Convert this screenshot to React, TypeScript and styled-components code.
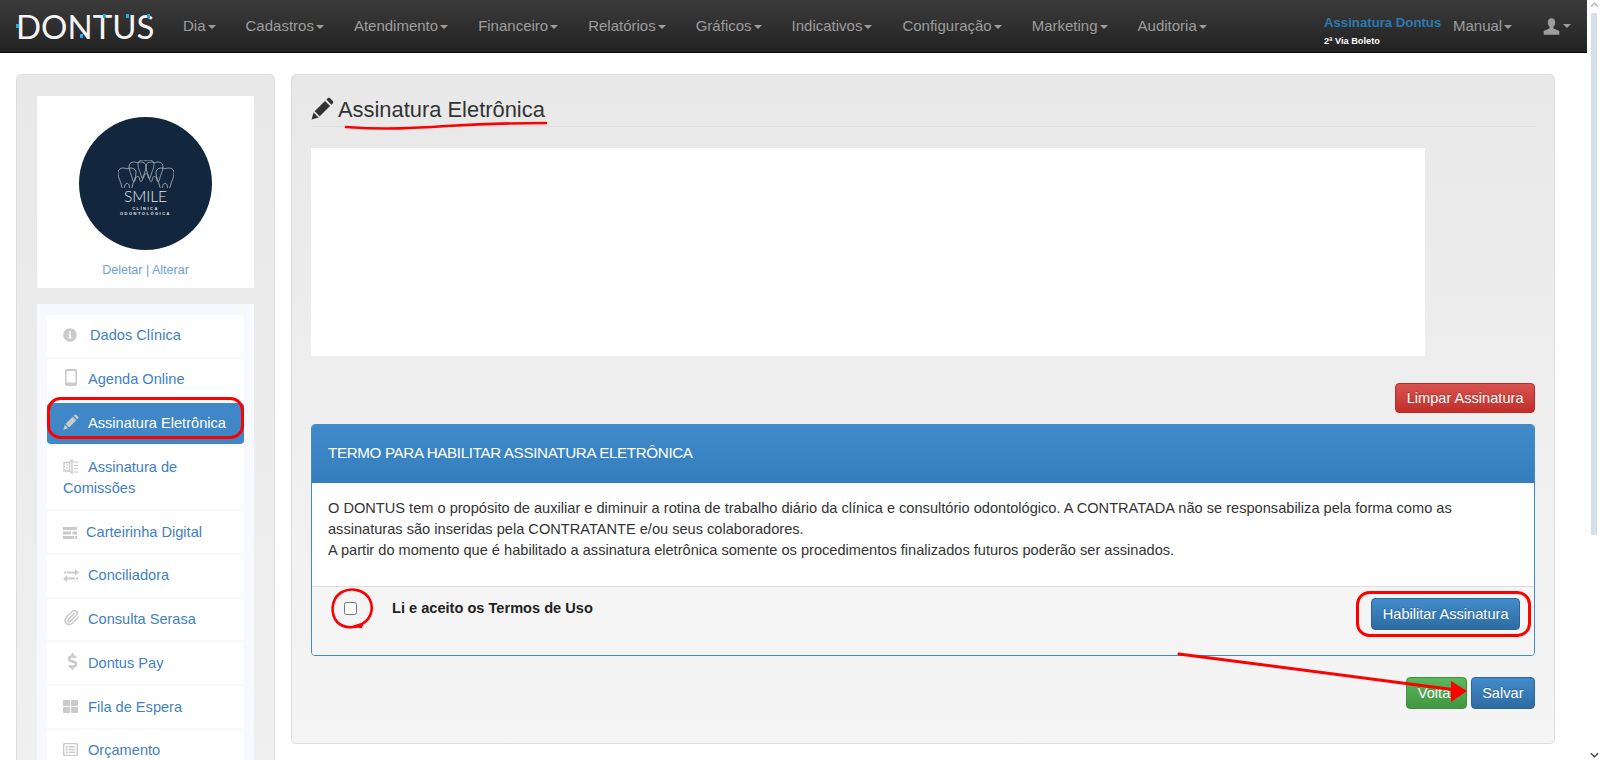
import React from 'react';
import styled, { createGlobalStyle } from 'styled-components';
import { FaInfoCircle, FaDollarSign, FaThLarge, FaRegListAlt } from 'react-icons/fa';
import { Paperclip } from 'lucide-react';

const GlobalStyle = createGlobalStyle`
  html, body { margin: 0; padding: 0; height: 100%; overflow: hidden; background: #fff; }
  body { font-family: "Liberation Sans", Arial, sans-serif; font-size: 14.6px; color: #333; }
  * { box-sizing: border-box; }
`;

const navLeft = [
  'Dia',
  'Cadastros',
  'Atendimento',
  'Financeiro',
  'Relatórios',
  'Gráficos',
  'Indicativos',
  'Configuração',
  'Marketing',
  'Auditoria',
];

const PencilIcon = ({ size = 16 }: { size?: number }) => (
  <svg width={size} height={size} viewBox="0 0 24 24" fill="currentColor">
    <path d="M0.5 23.5l2.2-7.4 5.2 5.2z" />
    <path d="M3.8 14.9L14.6 4.1l5.3 5.3L9.1 20.2z" />
    <path d="M16 2.7l1.5-1.5q1.1-1.1 2.4 0l2.9 2.9q1.1 1.3 0 2.4l-1.5 1.5z" />
  </svg>
);

const PhoneIcon = () => (
  <svg width="12" height="17" viewBox="0 0 12 17">
    <path
      fillRule="evenodd"
      fill="currentColor"
      d="M2 0h8a2 2 0 0 1 2 2v13a2 2 0 0 1-2 2H2a2 2 0 0 1-2-2V2a2 2 0 0 1 2-2zM1.6 2v11.4h8.8V2z"
    />
  </svg>
);

const CommissionIcon = () => (
  <svg width="16" height="15" viewBox="0 0 16 15" fill="none" stroke="currentColor">
    <path strokeWidth="1.4" d="M1 3.5h5.500v8.500H1z" />
    <path strokeWidth="1.4" d="M6.500 3L9 1v13l-2.500-2" />
    <path strokeWidth="1.2" d="M3 6h2M3 9h2M10 3h5.500M11 6.500h4M11 9.500h4M10 13h5" />
  </svg>
);

const TasksIcon = () => (
  <svg width="14" height="12" viewBox="0 0 14 12" fill="currentColor">
    <path d="M0 0h14v3H0zM0 4.500h8v3H0zM9.500 4.500H14v3H9.500zM0 9h11v3H0zM12 9h2v3h-2z" />
  </svg>
);

const TransferIcon = () => (
  <svg width="16" height="13" viewBox="0 0 16 13" fill="currentColor">
    <path d="M4 2.400h8V0l4 3.400-4 3.200V4.400H4zM1 2.400h2v2H1z" />
    <path d="M12 8.600H4V6.400L0 9.700 4 13v-2.400h8zM13 8.600h2v2h-2z" />
  </svg>
);

const UserIcon = () => (
  <svg width="17" height="17" viewBox="0 0 24 24" fill="currentColor">
    <path d="M12 0.500c-3.600 0-5.200 2.600-5.200 5.800 0 2.600 1 4.700 2.600 6.200v2L1 18.200V23.500h22v-5.300l-8.400-3.700v-2c1.600-1.500 2.600-3.600 2.600-6.200 0-3.200-1.600-5.800-5.200-5.800z" />
  </svg>
);

const ToothMark = ({ x, y, scale }: { x: number; y: number; scale: number }) => (
  <path
    transform={`translate(${x} ${y}) scale(${scale})`}
    d="M0 5C0 0 6-1 10 1c4-2 10-1 10 4 0 7-3 9-4 15-1 4-3 4-3.500 0-.5-4-4.500-4-5 0-.5 4-2.500 4-3.500 0C3 14 0 12 0 5z"
  />
);

const TeethLogo = () => (
  <svg width="56" height="28" viewBox="0 0 56 28" fill="none" stroke="#d5dade" strokeWidth="0.75">
    <ToothMark x={0} y={8} scale={0.9} />
    <ToothMark x={38} y={8} scale={0.9} />
    <ToothMark x={11} y={2} scale={0.85} />
    <ToothMark x={28} y={2} scale={0.85} />
    <ToothMark x={20} y={0} scale={0.8} />
  </svg>
);

const menu = [
  { label: 'Dados Clínica', icon: <FaInfoCircle size={14} />, slot: 27 },
  { label: 'Agenda Online', icon: <PhoneIcon />, slot: 25, inset: 2 },
  { label: 'Assinatura Eletrônica', icon: <PencilIcon size={16} />, slot: 25, active: true },
  { label: 'Assinatura de Comissões', icon: <CommissionIcon />, slot: 25 },
  { label: 'Carteirinha Digital', icon: <TasksIcon />, slot: 23 },
  { label: 'Conciliadora', icon: <TransferIcon />, slot: 25 },
  { label: 'Consulta Serasa', icon: <Paperclip size={17} strokeWidth={2.2} />, slot: 25 },
  { label: 'Dontus Pay', icon: <FaDollarSign size={17} />, slot: 25, inset: 1 },
  { label: 'Fila de Espera', icon: <FaThLarge size={15} />, slot: 25 },
  { label: 'Orçamento', icon: <FaRegListAlt size={15} />, slot: 25 },
];

export default function App() {
  return (
    <Shell>
      <GlobalStyle />
      <Page>
        <Navbar>
          <Brand>
            DONTUS
            <BrandDot $left={0} $top={10} />
            <BrandDot $left={64} $top={20} />
            <BrandDot $left={87} $top={0} />
            <BrandDot $left={110} $top={0} />
            <BrandDot $left={131} $top={0} />
          </Brand>
          <NavList>
            {navLeft.map((label) => (
              <NavItem key={label}>
                {label}
                <Caret />
              </NavItem>
            ))}
          </NavList>
          <NavRight>
            <PlanBlock>
              <PlanName>Assinatura Dontus</PlanName>
              <PlanLink>2ª Via Boleto</PlanLink>
            </PlanBlock>
            <ManualLink>
              Manual
              <Caret />
            </ManualLink>
            <UserMenu>
              <UserIcon />
              <Caret />
            </UserMenu>
          </NavRight>
        </Navbar>

        <Content>
          <SideWell>
            <ProfileCard>
              <LogoCircle>
                <TeethLogo />
                <LogoName>SMILE</LogoName>
                <LogoSub>CLÍNICA</LogoSub>
                <LogoSub>ODONTOLÓGICA</LogoSub>
              </LogoCircle>
              <ProfileLinks>Deletar | Alterar</ProfileLinks>
            </ProfileCard>
            <SideMenu>
              {menu.map((item) => (
                <MenuItem key={item.label} $active={item.active}>
                  <MenuIcon $slot={item.slot} $inset={item.inset || 0}>
                    {item.icon}
                  </MenuIcon>
                  {item.label}
                </MenuItem>
              ))}
            </SideMenu>
          </SideWell>

          <MainWell>
            <PageTitle>
              <PencilIcon size={23} />
              <TitleText>Assinatura Eletrônica</TitleText>
            </PageTitle>
            <SignatureCanvas />
            <ActionRow>
              <Button $kind="danger">Limpar Assinatura</Button>
            </ActionRow>
            <TermsPanel>
              <TermsHeading>TERMO PARA HABILITAR ASSINATURA ELETRÔNICA</TermsHeading>
              <TermsBody>
                O DONTUS tem o propósito de auxiliar e diminuir a rotina de trabalho diário da clínica e
                consultório odontológico. A CONTRATADA não se responsabiliza pela forma como as
                <br />
                assinaturas são inseridas pela CONTRATANTE e/ou seus colaboradores.
                <br />A partir do momento que é habilitado a assinatura eletrônica somente os procedimentos
                finalizados futuros poderão ser assinados.
              </TermsBody>
              <TermsFooter>
                <AcceptLabel>
                  <AcceptBox type="checkbox" />
                  Li e aceito os Termos de Uso
                </AcceptLabel>
                <Button $kind="primary" $tall>
                  Habilitar Assinatura
                </Button>
              </TermsFooter>
            </TermsPanel>
            <FooterRow>
              <Button $kind="success" $tall>
                Voltar
              </Button>
              <Button $kind="primary" $tall>
                Salvar
              </Button>
            </FooterRow>
          </MainWell>
        </Content>
      </Page>

      <Scrollbar>
        <ScrollArrow viewBox="0 0 10 6">
          <path d="M1 5l4-4 4 4" />
        </ScrollArrow>
        <ScrollThumb />
        <ScrollArrowDown viewBox="0 0 10 6">
          <path d="M1 1l4 4 4-4" />
        </ScrollArrowDown>
      </Scrollbar>

      {/* red marks drawn over the screenshot */}
      <Marks viewBox="0 0 1600 760">
        <path d="M346 127c40 3 70 1 100-1 35-2 70-3 100-3" strokeWidth="2.6" />
        <rect x="48.500" y="398.500" width="194" height="39" rx="12" strokeWidth="3" />
        <path d="M362 625c-10 4-22 3-27-6-5-10-2-22 7-27 10-5 23-2 28 8 4 9 1 19-8 24l-6 2 5 1" strokeWidth="2.600" />
        <rect x="1357.500" y="592.500" width="172" height="43" rx="12" strokeWidth="3" />
        <path d="M1179 654L1456 690" strokeWidth="3" />
        <path d="M1451 681L1467 691L1451 702z" fill="#f00" stroke="none" />
      </Marks>
    </Shell>
  );
}

const Shell = styled.div`
  display: flex;
  width: 100%;
  height: 100vh;
  overflow: hidden;
  position: relative;
`;

const Page = styled.div`
  flex: 1;
  min-width: 0;
`;

const Navbar = styled.header`
  display: flex;
  align-items: center;
  height: 53px;
  padding: 0 16px;
  background: linear-gradient(#3c3c3c, #222);
  border-bottom: 1px solid #080808;
  color: #9d9d9d;
  font-size: 15px;
`;

const Brand = styled.div`
  position: relative;
  width: 135px;
  margin-right: 17px;
  flex: none;
  font-family: "Lato", "Liberation Sans", sans-serif;
  font-size: 33px;
  font-weight: 400;
  line-height: 25px;
  letter-spacing: 0;
  color: #f4f4f4;
`;

const BrandDot = styled.i<{ $left: number; $top: number }>`
  position: absolute;
  left: ${(p) => p.$left}px;
  top: ${(p) => p.$top}px;
  width: 3px;
  height: 4px;
  background: #27a9e1;
`;

const NavList = styled.nav`
  display: flex;
  padding-bottom: 2px;
`;

const NavItem = styled.a`
  padding: 0 15px;
  white-space: nowrap;
`;

const Caret = styled.b`
  display: inline-block;
  width: 0;
  height: 0;
  margin-left: 2px;
  vertical-align: middle;
  border-top: 4px solid currentColor;
  border-left: 4px solid transparent;
  border-right: 4px solid transparent;
`;

const NavRight = styled.div`
  display: flex;
  align-items: center;
  margin-left: auto;
`;

const PlanBlock = styled.div`
  display: flex;
  flex-direction: column;
  gap: 4px;
  margin-top: 10px;
  width: 129px;
`;

const PlanName = styled.a`
  color: #2a7ab5;
  font-size: 13.2px;
  font-weight: 700;
  line-height: 16px;
`;

const PlanLink = styled.a`
  color: #fff;
  font-size: 9.2px;
  font-weight: 700;
  line-height: 12px;
`;

const ManualLink = styled.a`
  width: 90px;
  padding-bottom: 2px;
  white-space: nowrap;
`;

const UserMenu = styled.a`
  display: flex;
  align-items: center;
  gap: 1px;
`;

const Content = styled.main`
  display: flex;
  align-items: flex-start;
  gap: 16px;
  padding: 21px 32px 0 16px;
`;

const SideWell = styled.aside`
  flex: none;
  width: 259px;
  padding: 21px 20px;
  background: linear-gradient(#e8e8e8, #f0f0f0);
  border: 1px solid #dedede;
  border-radius: 5px;
`;

const ProfileCard = styled.section`
  display: flex;
  flex-direction: column;
  align-items: center;
  height: 192px;
  padding-top: 21px;
  background: #fff;
`;

const LogoCircle = styled.div`
  display: flex;
  flex-direction: column;
  align-items: center;
  justify-content: center;
  width: 133px;
  height: 133px;
  padding-top: 8px;
  border-radius: 50%;
  background: #12263d;
  color: #e6e9ec;
`;

const LogoName = styled.div`
  font-family: "Lato", "Liberation Sans", sans-serif;
  font-size: 15.5px;
  font-weight: 300;
  line-height: 15px;
  margin: 1px 0 2px;
`;

const LogoSub = styled.div`
  font-size: 4px;
  font-weight: 700;
  line-height: 5px;
  letter-spacing: 1.5px;
`;

const ProfileLinks = styled.a`
  margin-top: 11px;
  font-size: 12.5px;
  line-height: 18px;
  color: #6f9fe0;
`;

const SideMenu = styled.ul`
  display: flex;
  flex-direction: column;
  gap: 2px;
  margin: 16px 0 0;
  padding: 11px 10px;
  list-style: none;
  background: #f8f9fe;
`;

const MenuItem = styled.li<{ $active?: boolean }>`
  padding: 10.4px 16px;
  border-radius: 4px;
  line-height: 21px;
  background: ${(p) => (p.$active ? '#3f87c7' : '#fff')};
  color: ${(p) => (p.$active ? '#fff' : '#3f7fc4')};
`;

const MenuIcon = styled.span<{ $slot: number; $inset: number }>`
  display: inline-flex;
  align-items: center;
  width: ${(p) => p.$slot}px;
  height: 17px;
  padding-left: ${(p) => p.$inset}px;
  vertical-align: -2px;
  color: #cacaca;
`;

const MainWell = styled.section`
  flex: 1;
  min-width: 0;
  height: 670px;
  padding: 20px 19px 0;
  background: linear-gradient(#e8e8e8, #f5f5f5);
  border: 1px solid #dedede;
  border-radius: 5px;
`;

const PageTitle = styled.h1`
  display: flex;
  align-items: center;
  gap: 4px;
  height: 32px;
  margin: 0 0 21px;
  padding-bottom: 4px;
  border-bottom: 1px solid #e0e0e0;
  font-size: 21.9px;
  font-weight: 400;
  color: #333;
`;

const TitleText = styled.span`
  margin-top: 3px;
`;

const SignatureCanvas = styled.div`
  width: 1114px;
  height: 208px;
  background: #fff;
`;

const ActionRow = styled.div`
  display: flex;
  justify-content: flex-end;
  margin-top: 27px;
`;

const Button = styled.button<{ $kind: 'primary' | 'success' | 'danger'; $tall?: boolean }>`
  height: ${(p) => (p.$tall ? 32 : 30)}px;
  padding: 0 10.5px;
  border-radius: 4px;
  border: 1px solid
    ${(p) => (p.$kind === 'primary' ? '#2b669a' : p.$kind === 'success' ? '#3e8f3e' : '#b92c28')};
  background: ${(p) =>
    p.$kind === 'primary'
      ? 'linear-gradient(#428bca, #2d6ca2)'
      : p.$kind === 'success'
        ? 'linear-gradient(#5cb85c, #419641)'
        : 'linear-gradient(#d9534f, #c12e2a)'};
  color: #fff;
  font: 14.6px "Liberation Sans", Arial, sans-serif;
  text-shadow: 0 -1px 0 rgba(0, 0, 0, 0.2);
`;

const TermsPanel = styled.section`
  display: flex;
  flex-direction: column;
  height: 232px;
  margin-top: 11px;
  background: #fff;
  border: 1px solid #428bca;
  border-radius: 4px;
  overflow: hidden;
`;

const TermsHeading = styled.h3`
  height: 58px;
  margin: 0;
  padding: 0 16px 3px;
  display: flex;
  align-items: center;
  background: linear-gradient(#428bca, #357ebd);
  color: #fff;
  font-size: 15.2px;
  font-weight: 400;
  letter-spacing: -0.36px;
`;

const TermsBody = styled.p`
  flex: 1;
  margin: 0;
  padding: 14.5px 16px 0;
  line-height: 21px;
  white-space: nowrap;
  color: #333;
`;

const TermsFooter = styled.footer`
  display: flex;
  align-items: flex-start;
  justify-content: space-between;
  height: 69px;
  padding: 11px 14px 0 31.5px;
  background: #f5f5f5;
  border-top: 1px solid #ddd;
`;

const AcceptLabel = styled.label`
  display: flex;
  align-items: center;
  font-weight: 700;
  color: #222;
  line-height: 20px;
`;

const AcceptBox = styled.input`
  width: 13px;
  height: 13px;
  margin: 0 35.5px 0 0;
`;

const FooterRow = styled.div`
  display: flex;
  justify-content: flex-end;
  gap: 4px;
  margin-top: 21px;
`;

const Scrollbar = styled.div`
  position: relative;
  flex: none;
  display: flex;
  flex-direction: column;
  align-items: center;
  width: 13px;
  padding: 2px 0 2px 1px;
  background: #fff;
`;

const ScrollArrow = styled.svg`
  width: 9px;
  height: 6px;
  fill: none;
  stroke: #b5b5b5;
  stroke-width: 1.5;
`;

const ScrollArrowDown = styled(ScrollArrow)`
  margin-top: auto;
  stroke: #444;
`;

const ScrollThumb = styled.div`
  width: 6px;
  height: 522px;
  margin-top: 5px;
  background: #d4dfe9;
`;

const Marks = styled.svg`
  position: absolute;
  inset: 0;
  width: 1600px;
  height: 760px;
  pointer-events: none;
  fill: none;
  stroke: #f00;
  stroke-linecap: round;
`;
